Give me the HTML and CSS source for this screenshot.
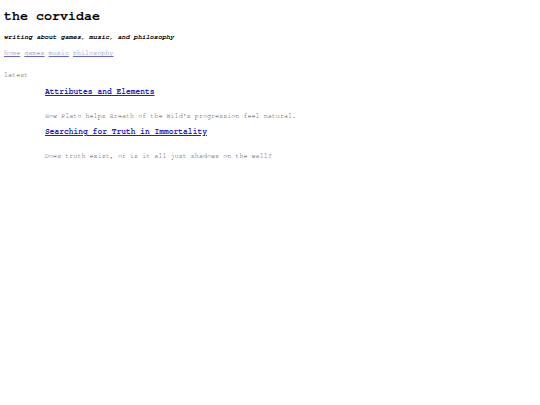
FILE: index.html
```html
<!DOCTYPE html>
<html>
<head>
<meta charset="utf-8">
<title>the corvidae</title>
<link rel="stylesheet" href="styles.css">
</head>
<body>
<header class="site-header">
  <h1 class="site-title">the corvidae</h1>
  <p class="tagline">writing about games, music, and philosophy</p>
  <nav class="nav">
    <a href="#">home</a> <a href="#">games</a> <a href="#">music</a> <a href="#">philosophy</a>
  </nav>
</header>
<main class="latest">
  <p class="latest-label">latest</p>
  <div class="posts">
    <article class="post">
      <h3 class="post-title"><a href="#">Attributes and Elements</a></h3>
      <p class="post-summary">How Plato helps Breath of the Wild's progression feel natural.</p>
    </article>
    <article class="post">
      <h3 class="post-title"><a href="#">Searching for Truth in Immortality</a></h3>
      <p class="post-summary">Does truth exist, or is it all just shadows on the wall?</p>
    </article>
  </div>
</main>
</body>
</html>
```
FILE: styles.css
```css
html, body {
  background: #ffffff;
}
body {
  margin: 0;
  padding: 0 4px;
  font-family: "FreeMono", "Liberation Mono", "Courier New", monospace;
  font-size: 6.75px;
  color: #444444;
}
.site-title {
  margin: 8px 0 0 0;
  font-size: 13.33px;
  line-height: 16px;
  font-weight: bold;
  color: #000000;
}
.tagline {
  margin: 9px 0 0 0;
  line-height: 8px;
  font-weight: bold;
  font-style: italic;
  color: #000000;
}
.nav {
  margin: 8px 0 0 0;
  line-height: 8px;
}
.nav a {
  color: #6666cc;
}
.latest-label {
  margin: 14px 0 0 0;
  line-height: 8px;
  color: #444444;
}
.posts {
  padding-left: 41px;
}
.post-title {
  margin: 8px 0 0 0;
  font-size: 7.95px;
  line-height: 10px;
  font-weight: bold;
}
.post-title a {
  color: #2222cc;
}
.post-summary {
  margin: 15px 0 0 0;
  line-height: 8px;
  color: #444444;
}
.post + .post .post-title {
  margin-top: 7px;
}
```
